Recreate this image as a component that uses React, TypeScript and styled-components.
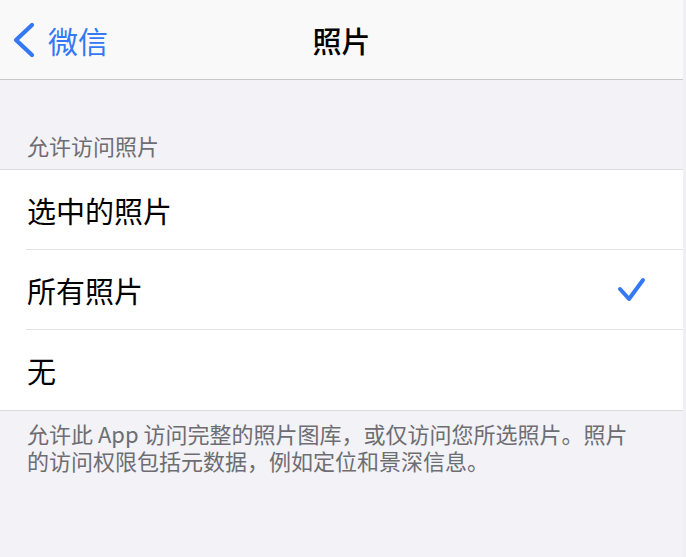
import React from 'react';
import styled, { createGlobalStyle } from 'styled-components';

const GlobalStyle = createGlobalStyle`
  html, body {
    margin: 0;
    padding: 0;
    background: #efeff4;
  }
  body {
    font-family: "Noto Sans CJK SC", "Noto Sans", sans-serif;
  }
`;

const Screen = styled.div`
  width: 683px;
  min-height: 557px;
  background: #f2f2f7;
  display: flex;
  flex-direction: column;
`;

const NavBar = styled.div`
  height: 79px;
  background: #f9f9f9;
  border-bottom: 1px solid #c9c9cd;
  display: grid;
  grid-template-columns: 1fr auto 1fr;
  align-items: center;
`;

const BackButton = styled.div`
  display: flex;
  align-items: center;
  gap: 12px;
  padding-left: 12px;
  color: #3478f6;
  font-size: 30px;
  line-height: 36px;
`;

const NavTitle = styled.div`
  font-size: 29px;
  font-weight: 500;
  line-height: 36px;
  color: #000;
`;

const SectionHeader = styled.div`
  height: 89px;
  box-sizing: border-box;
  display: flex;
  align-items: flex-end;
  padding: 0 0 12px 27px;
  font-size: 22px;
  line-height: 24px;
  color: #6d6d72;
`;

const Group = styled.div`
  background: #fff;
  border-top: 1px solid #dcdce0;
  border-bottom: 1px solid #dcdce0;
  padding-left: 26px;
`;

const Row = styled.div<{ $last?: boolean }>`
  height: 80px;
  box-sizing: border-box;
  display: flex;
  align-items: center;
  justify-content: space-between;
  padding: 0 36px 0 1px;
  border-bottom: ${({ $last }) => ($last ? 'none' : '1px solid #e3e3e6')};
  font-size: 29px;
  color: #000;
`;

const Footer = styled.div`
  padding: 9px 36px 0 27px;
  font-size: 22px;
  line-height: 27px;
  color: #6d6d72;
`;

function Chevron() {
  return (
    <svg width="24" height="36" viewBox="0 0 24 36">
      <path
        d="M20 3 L4 18 L20 33"
        fill="none"
        stroke="#3478f6"
        strokeWidth="4.2"
        strokeLinecap="round"
        strokeLinejoin="round"
      />
    </svg>
  );
}

function Check() {
  return (
    <svg width="30" height="26" viewBox="0 0 30 26">
      <path
        d="M3 12 L12 22 L26 3"
        fill="none"
        stroke="#3478f6"
        strokeWidth="4"
        strokeLinecap="round"
        strokeLinejoin="round"
      />
    </svg>
  );
}

const options = [
  { id: 1, text: '选中的照片', checked: false },
  { id: 2, text: '所有照片', checked: true },
  { id: 3, text: '无', checked: false }
];

function App() {
  return (
    <>
      <GlobalStyle />
      <Screen>
        <NavBar>
          <BackButton>
            <Chevron />
            <span>微信</span>
          </BackButton>
          <NavTitle>照片</NavTitle>
          <div />
        </NavBar>
        <SectionHeader>允许访问照片</SectionHeader>
        <Group>
          {options.map((item, i) => (
            <Row key={item.id} $last={i === options.length - 1}>
              <span>{item.text}</span>
              {item.checked && <Check />}
            </Row>
          ))}
        </Group>
        <Footer>
          允许此 App 访问完整的照片图库，或仅访问您所选照片。照片的访问权限包括元数据，例如定位和景深信息。
        </Footer>
      </Screen>
    </>
  );
}

export default App;
